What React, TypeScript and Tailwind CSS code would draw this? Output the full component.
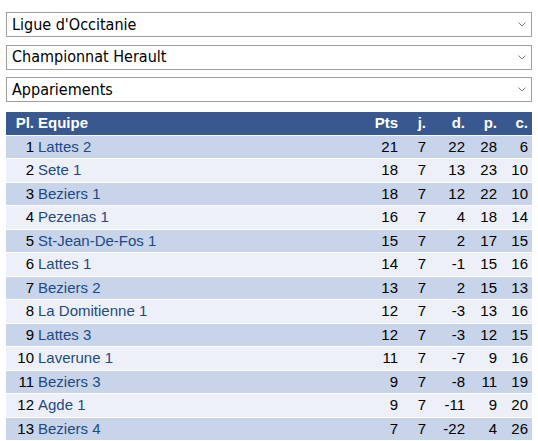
import React from "react";

const rows: [number, string, number, number, number, number, number][] = [
  [1, "Lattes 2", 21, 7, 22, 28, 6],
  [2, "Sete 1", 18, 7, 13, 23, 10],
  [3, "Beziers 1", 18, 7, 12, 22, 10],
  [4, "Pezenas 1", 16, 7, 4, 18, 14],
  [5, "St-Jean-De-Fos 1", 15, 7, 2, 17, 15],
  [6, "Lattes 1", 14, 7, -1, 15, 16],
  [7, "Beziers 2", 13, 7, 2, 15, 13],
  [8, "La Domitienne 1", 12, 7, -3, 13, 16],
  [9, "Lattes 3", 12, 7, -3, 12, 15],
  [10, "Laverune 1", 11, 7, -7, 9, 16],
  [11, "Beziers 3", 9, 7, -8, 11, 19],
  [12, "Agde 1", 9, 7, -11, 9, 20],
  [13, "Beziers 4", 7, 7, -22, 4, 26],
];

function Select({ label }: { label: string }) {
  return (
    <div className="h-[25px] border border-[#a0a0a0] bg-white flex items-center justify-between pl-[5px] pr-[5px]">
      <span className="text-[16px] text-black leading-none" style={{ fontFamily: "'DejaVu Sans Condensed', 'DejaVu Sans', sans-serif" }}>{label}</span>
      <svg width="8" height="5" viewBox="0 0 8 5">
        <path d="M0.5 0.5 L4 4 L7.5 0.5" fill="none" stroke="#808080" strokeWidth="1" />
      </svg>
    </div>
  );
}

export default function App() {
  return (
    <div className="w-[538px] h-[441px] bg-white overflow-hidden px-[6px] pt-[12px]" style={{ fontFamily: "'Liberation Sans', Arial, sans-serif" }}>
      <div className="w-[526px] flex flex-col gap-[7.5px]">
        <Select label="Ligue d'Occitanie" />
        <Select label="Championnat Herault" />
        <Select label="Appariements" />
      </div>
      <table className="mt-[9px] w-[526px] border-separate border-spacing-x-0 border-spacing-y-px -my-px text-[15px]">
        <thead>
          <tr className="bg-[#3a5890] text-white font-bold h-[22.5px]">
            <th className="text-right w-[32px] pr-[4px] font-bold">Pl.</th>
            <th className="text-left font-bold">Equipe</th>
            <th className="text-right w-[40px] pr-[3px] font-bold">Pts</th>
            <th className="text-right w-[32px] pr-[7px] font-bold">j.</th>
            <th className="text-right w-[36px] pr-[4px] font-bold">d.</th>
            <th className="text-right w-[32px] pr-[4px] font-bold">p.</th>
            <th className="text-right w-[31px] pr-[4px] font-bold">c.</th>
          </tr>
        </thead>
        <tbody>
          {rows.map((r, i) => (
            <tr key={r[0]} className={(i % 2 === 0 ? "bg-[#c7d4ea]" : "bg-[#edf0f8]") + " h-[22.5px] text-black"}>
              <td className="text-right pr-[4px]">{r[0]}</td>
              <td className="text-left text-[#1d4a84]">{r[1]}</td>
              <td className="text-right pr-[3px]">{r[2]}</td>
              <td className="text-right pr-[7px]">{r[3]}</td>
              <td className="text-right pr-[4px]">{r[4]}</td>
              <td className="text-right pr-[4px]">{r[5]}</td>
              <td className="text-right pr-[4px]">{r[6]}</td>
            </tr>
          ))}
        </tbody>
      </table>
    </div>
  );
}
